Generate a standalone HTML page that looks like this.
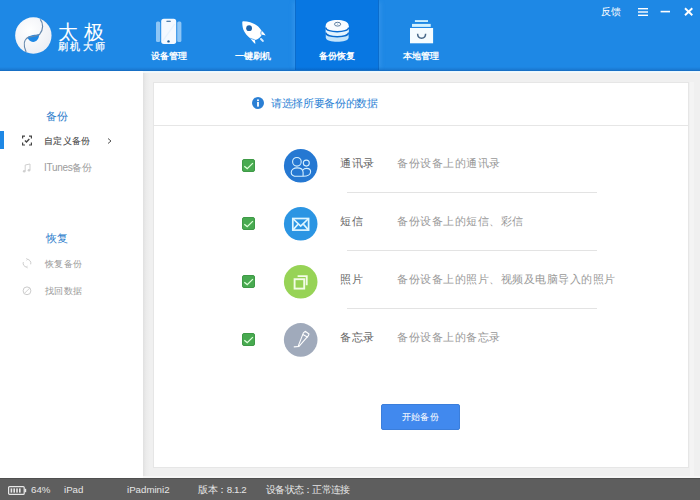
<!DOCTYPE html>
<html><head><meta charset="utf-8">
<style>
*{margin:0;padding:0;box-sizing:border-box}
html,body{width:700px;height:500px;overflow:hidden}
body{position:relative;background:#f0f0f0;font-family:"Liberation Sans",sans-serif;}
.abs{position:absolute}
svg{position:absolute;overflow:visible}
#hdr{left:0;top:0;width:700px;height:71px;background:#1e88e5;}
#hdr .line{left:0;top:67px;width:700px;height:4px;background:linear-gradient(rgba(0,30,90,0),rgba(0,30,90,0.12) 60%,rgba(0,30,90,0.28));z-index:2}
.tab{top:0;width:84px;height:70px;}
.tab.act{background:#0877e2;box-shadow:inset 1px 0 0 #0b6ccc,inset -1px 0 0 #0b6ccc,-4px 0 4px -2px rgba(90,170,245,0.3),4px 0 4px -2px rgba(90,170,245,0.3)}
.lbl{left:0;top:50px;width:84px;text-align:center;color:#fff;font-size:9px;line-height:12px;font-weight:bold;white-space:nowrap}
#side{left:0;top:71px;width:143px;height:407px;background:#fff}
#card{left:153px;top:82px;width:536px;height:386px;background:#fff;border:1px solid #e6e6e6}
#status{left:0;top:478px;width:700px;height:22px;background:#5e5e5e;box-shadow:inset 0 1px 0 #4f4f4f;color:#e6e6e6;font-size:9.7px;line-height:24px;white-space:nowrap}
.t{position:absolute;white-space:nowrap;line-height:1}
.cb{position:absolute;left:242px;width:13px;height:13px;border-radius:2px;background:#48aa50;border:1px solid #3f9a47}
.circ{position:absolute;left:284px;width:34px;height:34px;border-radius:50%}
.name{position:absolute;left:340px;color:#666;font-size:11px;letter-spacing:0.6px;line-height:1;white-space:nowrap}
.desc{position:absolute;left:397px;color:#999;font-size:11px;letter-spacing:0.5px;line-height:1;white-space:nowrap}
.div{position:absolute;left:347px;width:250px;height:1px;background:#e3e3e3}
</style></head>
<body>
<div id="hdr" class="abs">
  <div class="abs line"></div>
  <!-- logo -->
  <svg style="left:12px;top:14px" width="44" height="44" viewBox="0 0 44 44">
    <defs><radialGradient id="lg" cx="0.4" cy="0.35" r="0.7"><stop offset="0" stop-color="#ffffff"/><stop offset="1" stop-color="#eceef4"/></radialGradient></defs><circle cx="21.35" cy="21.55" r="18.2" fill="url(#lg)"/>
    <path d="M15.4,23.4 C18,21.3 24,20.6 27.2,20.6 C27,25.2 24.4,28 21,27.9 C18.4,27.8 16.2,25.5 15.4,23.4 Z" fill="#1e88e5"/>
    <path d="M28.2,5.3 C31.5,9 31.5,16 27.7,20.2 C25,22.5 19,22 16.3,23.3 C12,25.5 11,31 14.1,37.9" fill="none" stroke="#6688ad" stroke-width="1.2"/>
  </svg>
  <div class="t" style="left:57.5px;top:21.5px;color:#fff;font-size:20px;letter-spacing:6.5px">太极</div>
  <div class="t" style="left:58px;top:41.5px;color:#fff;font-size:10px;letter-spacing:2.3px;-webkit-text-stroke:0.25px #fff">刷机大师</div>

  <div class="abs tab" style="left:127px"><div class="abs lbl">设备管理</div></div>
  <div class="abs tab" style="left:211px"><div class="abs lbl">一键刷机</div></div>
  <div class="abs tab act" style="left:295px"><div class="abs lbl">备份恢复</div></div>
  <div class="abs tab" style="left:379px"><div class="abs lbl">本地管理</div></div>

  <!-- phone icon -->
  <svg style="left:150px;top:14px" width="40" height="34" viewBox="0 0 40 34">
    <rect x="6" y="7.5" width="4.2" height="20.4" rx="1.5" fill="#8ec6f6"/>
    <rect x="27.2" y="7.5" width="4.2" height="20.4" rx="1.5" fill="#8ec6f6"/>
    <rect x="11.2" y="4.8" width="15" height="25.1" rx="2.6" fill="#f4f9ff"/>
    <path d="M12,27 L24,10 L25.5,10 L13.5,27 Z" fill="#dbeeff" opacity="0.6"/>
    <rect x="16.3" y="6.8" width="4.6" height="0.9" rx="0.4" fill="#1d5a94"/>
    <circle cx="18.5" cy="27.4" r="1.2" fill="#1d5a94"/>
  </svg>
  <!-- rocket icon -->
  <svg style="left:236px;top:16px" width="36" height="32" viewBox="0 0 36 32">
    <path d="M7.2,5.2 C12.5,5.4 17,6.8 20.5,9.2 C23,11 24.5,12.8 25.3,14.6 C27,16 28.6,17.6 29.6,19.4 C28,19 26.8,18.8 25.6,18.9 C24.6,21.2 21.6,23.6 18.9,24 C19.2,25.4 19.4,26.6 19.3,28 C17.4,26.4 15.6,24.4 14.2,22.2 C11.6,20.5 8.6,17 7.3,13.6 C6.5,11 6.2,8 6.3,6.1 C6.3,5.5 6.7,5.2 7.2,5.2 Z" fill="#fff"/>
    <path d="M25,23 L26.8,24.9" stroke="#d8ecff" stroke-width="2" stroke-linecap="round"/><path d="M25.4,15 C24.8,16.5 24.6,17.5 25.4,19 M14.3,22.3 C15.8,22.9 17,23.2 18.8,23.8" fill="none" stroke="#1e88e5" stroke-width="0.7"/>
    <circle cx="13.1" cy="12.2" r="2.9" fill="#1d64ad"/>
  </svg>
  <!-- database icon -->
  <svg style="left:320px;top:14px" width="36" height="34" viewBox="0 0 36 34">
    <path d="M5.8,12 L5.8,23.4 C5.8,29.2 28.6,29.2 28.6,23.4 L28.6,12 Z" fill="#c3e4fb"/>
    <path d="M5.8,12 L5.8,18.6 C5.8,24.2 28.6,24.2 28.6,18.6 L28.6,12 Z" fill="#e4f4fe"/>
    <path d="M5.8,18.6 C5.8,24.2 28.6,24.2 28.6,18.6" fill="none" stroke="#0a6bd0" stroke-width="1.4"/>
    <path d="M5.8,11.2 C5.8,4.3 28.6,4.3 28.6,11.2 L28.6,13.4 C28.6,19.2 5.8,19.2 5.8,13.4 Z" fill="#f9fcff"/>
    <path d="M5.8,13.4 C5.8,19.2 28.6,19.2 28.6,13.4" fill="none" stroke="#0a6bd0" stroke-width="1.4"/>
    <ellipse cx="17.6" cy="10.2" rx="3.1" ry="1.9" fill="none" stroke="#4b6f96" stroke-width="0.9"/>
    <circle cx="17.6" cy="10.2" r="0.6" fill="#9ab4cc"/>
  </svg>
  <!-- store icon -->
  <svg style="left:404px;top:14px" width="36" height="34" viewBox="0 0 36 34">
    <rect x="10.9" y="6.1" width="13.1" height="1.9" fill="#c9efff"/>
    <rect x="8" y="9.9" width="18.7" height="3" fill="#d2f2ff"/>
    <rect x="6" y="14" width="23.1" height="15.3" fill="#f5fcff"/>
    <path d="M13.6,19.8 C13.6,25.6 21.6,25.6 21.6,19.8" fill="none" stroke="#4a6a8a" stroke-width="1.5"/>
  </svg>

  <div class="t" style="left:601px;top:7px;color:#fff;font-size:10px">反馈</div>
  <svg style="left:636px;top:6px" width="60" height="12" viewBox="0 0 60 12">
    <rect x="2" y="2" width="10" height="1.4" fill="#fff"/>
    <rect x="2" y="5.3" width="10" height="1.4" fill="#fff"/>
    <rect x="2" y="8.6" width="10" height="1.4" fill="#fff"/>
    <rect x="24.6" y="4.8" width="9.4" height="1.6" fill="#fff"/>
    <path d="M49,2.2 L56.3,9.3 M56.3,2.2 L49,9.3" stroke="#fff" stroke-width="1.9"/>
  </svg>
</div>

<div class="abs" style="left:143px;top:71px;width:10px;height:407px;background:linear-gradient(to right,#e0e0e0,#ebebeb 3px,#f0f0f0 7px)"></div>
<div class="abs" style="left:0;top:71px;width:700px;height:1px;background:#eaf8ff"></div><div class="abs" style="left:0;top:72px;width:700px;height:1px;background:#f4f7f8"></div>
<div class="abs" style="left:143px;top:476px;width:557px;height:2px;background:#f6f6f6"></div>
<div class="abs" style="left:690px;top:82px;width:4px;height:394px;background:#f4f4f4"></div>
<div id="side" class="abs">
  <div class="t" style="left:46px;top:40px;color:#2d7dcb;font-size:11px;letter-spacing:0.3px">备份</div>
  <div class="abs" style="left:0;top:60px;width:4px;height:18px;background:#1e88e5"></div>
  <svg style="left:20px;top:63px" width="14" height="14" viewBox="0 0 14 14">
    <path d="M2.6,4.6 L2.6,2.1 L5,2.1 M9,2.1 L11.4,2.1 L11.4,4.6 M11.4,8.6 L11.4,11 L9,11 M5,11 L2.6,11 L2.6,8.6" fill="none" stroke="#444" stroke-width="1.2"/>
    <path d="M4.9,6.4 L6.5,8 L9.3,5" fill="none" stroke="#444" stroke-width="1.4"/>
  </svg>
  <div class="t" style="left:44px;top:66px;color:#444;font-size:9px;letter-spacing:0.35px;-webkit-text-stroke:0.1px #444">自定义备份</div>
  <svg style="left:105px;top:65.5px" width="8" height="8" viewBox="0 0 8 8">
    <path d="M3,1.5 L6,4 L3,6.5" fill="none" stroke="#555" stroke-width="1"/>
  </svg>
  <svg style="left:22px;top:92px" width="10" height="10" viewBox="0 0 10 10">
    <path d="M3.2,8 L3.2,2 L8,1 L8,7" fill="none" stroke="#cfcfcf" stroke-width="1"/>
    <circle cx="2.2" cy="8.2" r="1.3" fill="#cfcfcf"/>
    <circle cx="7" cy="7.2" r="1.3" fill="#cfcfcf"/>
  </svg>
  <div class="t" style="left:44px;top:92px;color:#9c9c9c;font-size:10px;letter-spacing:-0.3px">ITunes备份</div>
  <div class="t" style="left:46px;top:162px;color:#2d7dcb;font-size:11px;letter-spacing:0.3px">恢复</div>
  <svg style="left:21px;top:186px" width="12" height="12" viewBox="0 0 12 12">
    <path d="M6.3,2.3 A3.9,3.9 0 0 1 9.7,7.3 M5.7,10.1 A3.9,3.9 0 0 1 2.3,5.1" fill="none" stroke="#cdcdcd" stroke-width="1"/>
    <path d="M5.2,1.4 L6.6,2.3 L5.4,3.3 M6.8,11 L5.4,10.1 L6.6,9.1" fill="none" stroke="#cdcdcd" stroke-width="0.8"/>
  </svg>
  <div class="t" style="left:45px;top:188.5px;color:#999;font-size:9px;letter-spacing:0.25px">恢复备份</div>
  <svg style="left:21px;top:214px" width="12" height="12" viewBox="0 0 12 12">
    <circle cx="6" cy="5.8" r="3.9" fill="none" stroke="#cccccc" stroke-width="1"/>
    <path d="M3.4,8.4 L8.6,3.2" stroke="#cccccc" stroke-width="0.9"/>
  </svg>
  <div class="t" style="left:45px;top:215.5px;color:#999;font-size:9px;letter-spacing:0.25px">找回数据</div>
</div>

<div id="card" class="abs">
  <div class="abs" style="left:0;top:42px;width:534px;height:1px;background:#e6e6e6"></div>
</div>
<svg style="left:252px;top:97px" width="12" height="12" viewBox="0 0 12 12">
  <circle cx="6" cy="6" r="6" fill="#2a7fd4"/>
  <rect x="5.1" y="5" width="1.8" height="4.6" fill="#fff"/>
  <circle cx="6" cy="3.2" r="1" fill="#fff"/>
</svg>
<div class="t" style="left:271px;top:98px;color:#2a7fd4;font-size:10.5px;letter-spacing:-0.35px">请选择所要备份的数据</div>

<!-- rows -->
<div class="cb" style="top:159px"></div>
<div class="cb" style="top:217px"></div>
<div class="cb" style="top:275px"></div>
<div class="cb" style="top:333px"></div>
<svg style="left:242px;top:159px" width="13" height="13" viewBox="0 0 13 13"><path d="M2.3,7.2 L5.2,9.6 L10.9,4.1" fill="none" stroke="#dcffd8" stroke-width="1.3"/></svg>
<svg style="left:242px;top:217px" width="13" height="13" viewBox="0 0 13 13"><path d="M2.3,7.2 L5.2,9.6 L10.9,4.1" fill="none" stroke="#dcffd8" stroke-width="1.3"/></svg>
<svg style="left:242px;top:275px" width="13" height="13" viewBox="0 0 13 13"><path d="M2.3,7.2 L5.2,9.6 L10.9,4.1" fill="none" stroke="#dcffd8" stroke-width="1.3"/></svg>
<svg style="left:242px;top:333px" width="13" height="13" viewBox="0 0 13 13"><path d="M2.3,7.2 L5.2,9.6 L10.9,4.1" fill="none" stroke="#dcffd8" stroke-width="1.3"/></svg>

<svg style="left:284px;top:149.4px" width="34" height="34" viewBox="0 0 34 34">
  <circle cx="16.7" cy="16.8" r="16.8" fill="#2578d2"/>
  <g fill="none" stroke="#d5f0ff" stroke-width="1.1">
    <circle cx="12.9" cy="12.8" r="4.3"/>
    <circle cx="22.3" cy="14.1" r="3"/>
    <path d="M19.1,27.3 L19.1,23.6 C19.1,20.5 16.5,18.9 13.1,18.9 C9.7,18.9 7.2,20.8 7.2,23.4 C7.2,26 10,27.3 13.1,27.3 Z"/>
    <path d="M19.3,27.3 C23.5,27.3 26.6,25.5 26.6,22.8 C26.6,20.7 25,19.4 22.6,19.4 C21,19.4 19.6,20 18.9,21"/>
  </g>
</svg>
<svg style="left:284px;top:207.2px" width="34" height="34" viewBox="0 0 34 34">
  <circle cx="16.7" cy="16.8" r="16.8" fill="#2b95e3"/>
  <g fill="none" stroke="#e0f6ff" stroke-width="1.7">
    <rect x="8.8" y="11.5" width="15.8" height="11.6"/>
    <path d="M8.8,11.5 L16.7,19 L24.6,11.5"/>
    <path d="M8.8,23.1 L14,17.2 M24.6,23.1 L19.4,17.2"/>
  </g>
</svg>
<svg style="left:284px;top:265.1px" width="34" height="34" viewBox="0 0 34 34">
  <circle cx="16.7" cy="16.8" r="16.8" fill="#97d356"/>
  <g fill="none" stroke="#f2fce6" stroke-width="1.9">
    <rect x="10.6" y="14.2" width="9.6" height="9.4"/>
    <path d="M13.6,11.1 L22.7,11.1 L22.7,20.3"/>
  </g>
</svg>
<svg style="left:284px;top:322.8px" width="34" height="34" viewBox="0 0 34 34">
  <circle cx="16.7" cy="16.9" r="16.8" fill="#a0aabb"/>
  <g fill="none" stroke="#ffffff" stroke-width="1.1" stroke-linejoin="round">
    <path d="M19.4,9.9 L21.2,8.3 L25,11 L24.4,12.6 L15.2,23.2 L14.4,22.6 Z"/>
    <path d="M18.8,11.6 L23.9,14.3"/>
    <path d="M9.8,23.9 L15.2,23.5"/>
  </g>
</svg>

<div class="name" style="top:158px">通讯录</div>
<div class="name" style="top:216px">短信</div>
<div class="name" style="top:274px">照片</div>
<div class="name" style="top:332px">备忘录</div>
<div class="desc" style="top:158px">备份设备上的通讯录</div>
<div class="desc" style="top:216px">备份设备上的短信、彩信</div>
<div class="desc" style="top:274px">备份设备上的照片、视频及电脑导入的照片</div>
<div class="desc" style="top:332px">备份设备上的备忘录</div>
<div class="div" style="top:192px"></div>
<div class="div" style="top:250px"></div>
<div class="div" style="top:308px"></div>

<div class="abs" style="left:381px;top:404px;width:79px;height:26px;background:#4189ee;border:1px solid #3b7edb;border-radius:2px"></div>
<div class="t" style="left:381px;top:413px;width:79px;text-align:center;color:#fff;font-size:9px;letter-spacing:0.35px;-webkit-text-stroke:0.05px #fff">开始备份</div>

<div id="status" class="abs">
  <svg style="left:8px;top:8px" width="19" height="9" viewBox="0 0 19 9">
    <rect x="0.6" y="0.6" width="15.6" height="7.8" rx="1" fill="none" stroke="#e8e8e8" stroke-width="1.2"/>
    <rect x="16.6" y="2.8" width="1.6" height="3.4" fill="#e8e8e8"/>
    <rect x="2.6" y="2.4" width="1.6" height="4.2" fill="#e8e8e8"/>
    <rect x="5.4" y="2.4" width="1.6" height="4.2" fill="#e8e8e8"/>
    <rect x="8.2" y="2.4" width="1.6" height="4.2" fill="#e8e8e8"/>
    <rect x="11" y="2.4" width="1.6" height="4.2" fill="#e8e8e8"/>
  </svg>
  <span class="abs" style="left:31px">64%</span>
  <span class="abs" style="left:64px">iPad</span>
  <span class="abs" style="left:127px">iPadmini2</span>
  <span class="abs" style="left:198px;letter-spacing:-0.4px">版本：8.1.2</span>
  <span class="abs" style="left:266px;letter-spacing:-0.75px">设备状态：正常连接</span>
</div>
</body></html>
